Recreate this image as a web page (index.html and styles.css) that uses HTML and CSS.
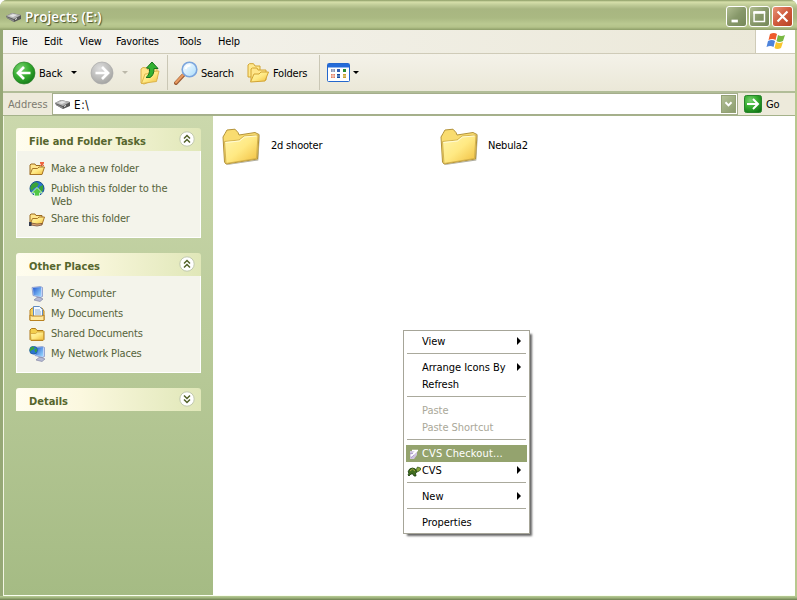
FILE: index.html
```
<!DOCTYPE html>
<html lang="en">
<head>
<meta charset="utf-8">
<title>Projects (E:)</title>
<link rel="stylesheet" href="styles.css">
</head>
<body>
<svg class="defs" aria-hidden="true">
  <defs>
    <linearGradient id="fold" x1="0" y1="0" x2="1" y2="1"><stop offset="0" stop-color="#fff5ac"/><stop offset=".5" stop-color="#ffe983"/><stop offset="1" stop-color="#f0bd3c"/></linearGradient>
    <radialGradient id="green" cx=".35" cy=".3" r=".8"><stop offset="0" stop-color="#79d170"/><stop offset=".5" stop-color="#36ad30"/><stop offset="1" stop-color="#117516"/></radialGradient>
    <radialGradient id="gray" cx=".4" cy=".3" r=".8"><stop offset="0" stop-color="#dedede"/><stop offset=".6" stop-color="#b9b9b7"/><stop offset="1" stop-color="#9c9c9a"/></radialGradient>
    <linearGradient id="blue" x1="0" y1="0" x2="1" y2="1"><stop offset="0" stop-color="#2458d0"/><stop offset="1" stop-color="#9bdcff"/></linearGradient>
    <linearGradient id="lens" x1="0" y1="0" x2="1" y2="1"><stop offset="0" stop-color="#fff"/><stop offset="1" stop-color="#a9dcfb"/></linearGradient>
    <symbol id="drive" viewBox="0 0 16 12"><path d="M0 5 6 2l9 2v4L8 11 1 7z" fill="#555"/><path d="M0 5 6 2l9 2-7 4z" fill="#b4b4b4"/><path d="M3 5l4-2 4 1-4 2z" fill="#e4e4e4"/><path d="M1 6l7 3v2L1 7z" fill="#888"/><path d="M9 8l2-1v1l-2 1z" fill="#eee"/></symbol>
    <symbol id="bigfolder" viewBox="0 0 38 38"><path d="M4 36.500 35.500 31.500 37.500 6l.3 2-1.500 24.500L5 37z" fill="#8c8975" opacity=".7"/><path d="M1 9 3 5.500 5 2l8-.8 3 3.300 1 2.500L33 4.500l4 2-1.500 24.500L4 36 2.500 34z" fill="#f9dc70" stroke="#b3933a"/><path d="M2.500 13.500 17 12l5-4 14-1-1.500 23.500L4 35.500z" fill="url(#fold)" stroke="#c9a745" stroke-width=".8"/><path d="M3.500 14.500 17.500 13l5-4 12-1" fill="none" stroke="#fffbd5"/></symbol>
    <symbol id="folder" viewBox="0 0 16 16"><path d="M1 13.500V4l1.500-1.500h4L8 4.500h6l1 1v8L14 14.500H2z" fill="#f3ce4e" stroke="#ae7918"/><path d="M1.500 7.500h5l2-1.500h6v7.500l-1 .5H2z" fill="url(#fold)" stroke="#ca9930" stroke-width=".7"/></symbol>
    <symbol id="openfolder" viewBox="0 0 16 16"><path d="M1 13.500V4l1-1h4l1 1.500h6V13z" fill="#ffe58b" stroke="#9b6a20"/><path d="M1 13.500 3.500 7.500h5L10 6h5.500L13 13.500z" fill="url(#fold)" stroke="#a87527"/></symbol>
    <symbol id="monitor" viewBox="0 0 16 16"><path d="M3 1.500 11.500.5l2 1v9l-2 1L4 9.500z" fill="#c0d2fa" stroke="#788bc0" stroke-width=".7"/><path d="M4 2 12 1v9.500L4.700 9z" fill="url(#blue)"/><path d="M8 11.500h3l3 1.500-3 2.500-6-1.500z" fill="#b5bad4" stroke="#777b9e" stroke-width=".6"/></symbol>
    <symbol id="globe" viewBox="0 0 16 16"><circle cx="8" cy="7.500" r="7" fill="#2a75d1" stroke="#174f8b"/><path d="M3 3l4-2 3 2-2 3-3 1-2 3-2-3zM10 6l4-2v5l-2 3-2-3z" fill="#39a339"/></symbol>
    <symbol id="chev" viewBox="0 0 16 16"><circle cx="8" cy="8" r="7.200" fill="#fff" stroke="#c1c9ae"/><path d="M5 7.500l3-3 3 3M5 11.500l3-3 3 3" fill="none" stroke="#526229" stroke-width="1.500"/></symbol>
  </defs>
</svg>
<div class="window">
  <header class="titlebar">
    <svg class="i-drive"><use href="#drive"/></svg><h1>Projects (E:)</h1>
    <div class="controls">
      <b class="ctl"><svg viewBox="0 0 21 21"><path d="M5 15.500h7" stroke="#fff" stroke-width="3"/></svg></b>
      <b class="ctl"><svg viewBox="0 0 21 21"><path d="M4.500 5.500v10.500h11.500V5.500" fill="none" stroke="#fff" stroke-width="1.600"/><path d="M3.700 6h13.100" stroke="#fff" stroke-width="3"/></svg></b>
      <b class="ctl close"><svg viewBox="0 0 21 21"><path d="M5 5l11 11M16 5l-11 11" stroke="#fff" stroke-width="2.400"/></svg></b>
    </div>
  </header>
  <div class="frame">
    <div class="menurow">
      <nav><span class="m1">File</span><span class="m2">Edit</span><span class="m3">View</span><span class="m4">Favorites</span><span class="m5">Tools</span><span class="m6">Help</span></nav>
      <div class="flag"><svg viewBox="0 0 20 18"><path d="M4 2q4-2 7 0L9.500 8q-3-2-7 0z" fill="#ee5b2b"/><path d="M12 3q3 2 7 0l-2 6q-4 2-6.500 0z" fill="#79b843"/><path d="M2 9q4-2 7 0l-1.500 6q-3-2-7 0z" fill="#4c83dc"/><path d="M10 10q3 2 7 0l-2 6q-4 2-6.500 0z" fill="#f8c52d"/></svg></div>
    </div>
    <div class="toolbar">
      <svg class="nav" viewBox="0 0 24 24"><circle cx="12" cy="12" r="11" fill="url(#green)" stroke="#2b8329" stroke-width=".7"/><path d="M18.500 12H6.500M12 6l-6 6 6 6" fill="none" stroke="#fff" stroke-width="2.700"/></svg>
      <span class="tb-back">Back</span><i class="drop"></i>
      <svg class="nav fwd" viewBox="0 0 24 24"><circle cx="12" cy="12" r="11" fill="url(#gray)" stroke="#aaa" stroke-width=".7"/><path d="M5.500 12h12M12 6l6 6-6 6" fill="none" stroke="#fff" stroke-width="2.700"/></svg>
      <i class="drop dim"></i>
      <svg class="up" viewBox="0 0 20 24"><path d="M1 22V8l2-1.500 4 .5 1 2 9-2v11L4 23z" fill="#ffe588" stroke="#d9b04a"/><path d="M1.500 22.500 5 13l5-.5 2-2 7-.5-2.500 10.500z" fill="url(#fold)" stroke="#d6aa3c" stroke-width=".8"/><path d="M6 16.500h4q4-2 4-9h4L12 1 6.500 7l3 .5q.5 6-3.500 9z" fill="#33b231" stroke="#187320"/></svg>
      <i class="vsep s1"></i>
      <svg class="search" viewBox="0 0 24 24"><path d="M2 22 9 14.500" stroke="#9b5c34" stroke-width="4" stroke-linecap="round"/><path d="M2 21.500 9 14" stroke="#e89a60" stroke-width="2.200" stroke-linecap="round"/><circle cx="15.500" cy="8.500" r="7.300" fill="url(#lens)" stroke="#7ba5dd" stroke-width="1.600"/><path d="M11.500 8q1-4 5-3.500" fill="none" stroke="#fff" stroke-width="2"/></svg>
      <span class="tb-search">Search</span>
      <svg class="folders" viewBox="0 0 22 20"><path d="M1 14V2l1.500-1.300h4L8 3h5v11z" fill="#ffe98f" stroke="#d2a433"/><path d="M4 18V6l1.500-1h4.500l1 2h8v10z" fill="#ffe68a" stroke="#d2a433"/><path d="M3.500 19 7 11h5l2-2h7.500l-3.500 9z" fill="url(#fold)" stroke="#d2a433"/></svg>
      <span class="tb-folders">Folders</span><i class="vsep s2"></i>
      <svg class="views" viewBox="0 0 23 19"><rect x=".5" y=".5" width="22" height="18" rx="1" fill="#fff" stroke="#2467cc"/><path d="M1 1h21v3.500H1z" fill="#246bd9"/><path d="M4 6h4v3H4z" fill="#8b98b8"/><path d="M10 6h3v3h-3z" fill="#345fb2"/><path d="M16 6h3v3h-3z" fill="#268b32"/><path d="M4 11h4v4H4z" fill="#e68264"/><path d="M10 11h3v4h-3z" fill="#164c9f"/><path d="M16 11h3v4h-3z" fill="#c8a32f"/><path d="M3 13h17M6 5v11" stroke="#fff" stroke-width=".6"/></svg>
      <i class="drop vdrop"></i>
    </div>
    <div class="address">
      <label>Address</label>
      <div class="field"><svg class="i-drive"><use href="#drive"/></svg><span class="path">E:\</span><b class="combo"><svg viewBox="0 0 15 17"><path d="M4 6.500l3.500 3.500L11 6.500" fill="none" stroke="#fff" stroke-width="2.200"/></svg></b></div>
      <svg class="go" viewBox="0 0 18 18"><rect x=".5" y=".5" width="17" height="17" rx="2" fill="url(#green)" stroke="#28842c"/><path d="M3 9h11M9 4l5 5-5 5" fill="none" stroke="#fff" stroke-width="2"/></svg><span class="golabel">Go</span>
    </div>
    <main>
      <aside>
        <section>
          <h2><span>File and Folder Tasks</span><svg><use href="#chev"/></svg></h2>
          <ul>
            <li><svg viewBox="0 0 16 16"><use href="#openfolder"/><path d="M11.500 2.500l1.500-1.500 1.500 1.500-1.500 2zM11 1l4 4M15 1l-4 4" fill="#f35b2c" stroke="#ee643f"/></svg><span>Make a new folder</span></li>
            <li class="two"><svg viewBox="0 0 16 16"><use href="#globe"/><path d="M2.500 12 8 6.500l5.500 5.500H10.500v3h-5v-3z" fill="#51c746" stroke="#e2ffe0" stroke-width=".8"/></svg><span>Publish this folder to the<br>Web</span></li>
            <li><svg viewBox="0 0 16 16"><use href="#openfolder"/><path d="M2 12l3 .5 3 .5 5-.5v1.500l-5 1L2 14z" fill="#e3ad79" stroke="#633b26" stroke-width=".7"/><path d="M0 11h2.500v4H0z" fill="#353c50"/></svg><span>Share this folder</span></li>
          </ul>
        </section>
        <section>
          <h2><span>Other Places</span><svg><use href="#chev"/></svg></h2>
          <ul>
            <li><svg><use href="#monitor"/></svg><span>My Computer</span></li>
            <li><svg viewBox="0 0 16 16"><path d="M1 14V4l2-2h10l2 3v9z" fill="#f5ce5c" stroke="#b88120"/><path d="M4.500.5h6l3 3v8h-9z" fill="#f5faff" stroke="#608bc1"/><path d="M6 4h5M6 6h6M6 8h6" stroke="#8caed9"/><path d="M1 9l2 1h10l2-1v5.500H1z" fill="#ffe9a0" stroke="#b88120"/></svg><span>My Documents</span></li>
            <li><svg><use href="#folder"/></svg><span>Shared Documents</span></li>
            <li><svg viewBox="0 0 16 16"><use href="#monitor" x="2" width="16" height="16"/><use href="#globe" width="9" height="9"/></svg><span>My Network Places</span></li>
          </ul>
        </section>
        <section>
          <h2><span>Details</span><svg class="flip"><use href="#chev"/></svg></h2>
        </section>
      </aside>
      <div class="files">
        <div class="file"><svg><use href="#bigfolder"/></svg><span>2d shooter</span></div>
        <div class="file"><svg><use href="#bigfolder"/></svg><span>Nebula2</span></div>
      </div>
    </main>
  </div>
</div>
<div class="ctx">
  <div class="it sub"><span>View</span></div><hr>
  <div class="it sub"><span>Arrange Icons By</span></div>
  <div class="it"><span>Refresh</span></div><hr>
  <div class="it off"><span>Paste</span></div>
  <div class="it off"><span>Paste Shortcut</span></div><hr>
  <div class="it sel"><svg viewBox="0 0 14 14"><path d="M3 4h7v4l-3 4H3z" fill="#cfc3df"/><path d="M4 9l6-5.500M5 3.500h6" fill="none" stroke="#fff" stroke-width="1.700"/><path d="M3 6.500h3M4 11l3-3" stroke="#b3a2d0"/></svg><span>CVS Checkout...</span></div>
  <div class="it sub"><svg viewBox="0 0 14 14"><path d="M1 8q1-4 4.500-4Q9 4 10 8l-1.500 1 .5 3H7l-1-2H4l-2 2-1-1 1-2z" fill="#426e20" stroke="#183b0a" stroke-width=".8"/><path d="M9 6l1.500-3 3 1v2l-3 2z" fill="#86a33b" stroke="#294d10" stroke-width=".7"/><path d="M3 7l2.500-2L8 7" fill="none" stroke="#a5a340"/></svg><span>CVS</span></div><hr>
  <div class="it sub"><span>New</span></div><hr>
  <div class="it"><span>Properties</span></div>
</div>
</body>
</html>
```
FILE: styles.css
```
* { box-sizing: border-box; }
body { margin: 0; width: 797px; height: 600px; overflow: hidden; background: #fff; color: #000; font: 11px/13px "DejaVu Sans Condensed", "DejaVu Sans", sans-serif; font-stretch: condensed; letter-spacing: -.2px; white-space: nowrap; }
svg { display: block; flex: none; }
.defs { position: absolute; width: 0; height: 0; }
.window { width: 797px; height: 600px; display: flex; flex-direction: column; border-radius: 7px 7px 0 0; overflow: hidden; background: linear-gradient(#a0b07c 595px, #b9cc97 596px, #9cb17a 598px, #6c7d50 600px); }
.titlebar { height: 30px; flex: none; display: flex; align-items: center; padding: 3px 4px 0 6px; background: linear-gradient(#8b9b64 0, #d6dfaa 2px, #c0cc98 5px, #a8b681 9px, #aab982 18px, #bac991 24px, #b4c38a 27px, #8d9d68 30px); }
.i-drive { width: 16px; height: 12px; }
h1 { margin: 1px 0 0 3px; font: 600 13.500px/18px "Open Sans", sans-serif; letter-spacing: .05px; color: #fff; text-shadow: 1px 1px 1px #46522c; }
.controls { margin-left: auto; display: flex; gap: 2px; }
.ctl { width: 21px; height: 21px; border: 1px solid #fff; border-radius: 3px; background: linear-gradient(135deg, #b0bd91, #87986a 50%, #76885a); }
.ctl svg { width: 19px; height: 19px; }
.close { background: linear-gradient(135deg, #e99478, #cf5a3c 50%, #b84424); }
.frame { flex: 1; min-height: 0; margin-bottom: 4px; display: flex; flex-direction: column; border: solid; border-width: 0 2px 0 3px; border-color: #9aae70 #b7c88f #829562 #96a876; background: #edeadb; }
.menurow { height: 24px; flex: none; display: flex; border-bottom: 1px solid #cfcbb8; background: linear-gradient(90deg, #f5f4ef, #ebe8d8); }
nav { flex: 1; display: flex; padding: 5px 0 0 9px; }
nav span { flex: none; }
.m1 { width: 32px; } .m2 { width: 35px; } .m3 { width: 37px; } .m4 { width: 62px; } .m5 { width: 40px; }
.flag { width: 40px; background: #fff; border-left: 1px solid #cfcbb8; padding: 2px 0 0 10px; }
.flag svg { width: 20px; height: 18px; }
.toolbar { height: 39px; flex: none; display: flex; align-items: center; padding-left: 9px; border-bottom: 2px solid #b1bd98; background: linear-gradient(#f4f2e9, #ebe8d8); }
.toolbar > span { padding-top: 1px; }
.nav { width: 24px; height: 24px; }
.tb-back { width: 27px; margin-left: 3px; }
.drop { border: solid transparent; border-width: 3px 3px 0; border-top-color: #000; margin-left: 5px; }
.fwd { margin-left: 13px; }
.dim { margin-left: 8px; border-top-color: #bbb8a9; }
.up { width: 20px; height: 24px; margin-left: 12px; }
.vsep { width: 1px; height: 35px; background: #cac7b5; }
.s1 { margin-left: 7px; }
.search { width: 24px; height: 24px; margin-left: 6px; }
.tb-search { margin-left: 3px; width: 34px; }
.folders { width: 22px; height: 20px; margin-left: 12px; }
.tb-folders { margin-left: 4px; width: 36px; }
.s2 { margin-left: 10px; }
.views { width: 23px; height: 19px; margin-left: 7px; }
.vdrop { margin-left: 3px; }
.address { height: 23px; flex: none; display: flex; align-items: center; padding-left: 5px; border-bottom: 1px solid #a5b28a; }
.address label { width: 44px; color: #7d7b70; letter-spacing: .05px; padding-top: 1px; }
.field { width: 686px; height: 22px; display: flex; align-items: center; gap: 3px; padding: 0 1px 0 2px; background: #fff; border: 1px solid #a5ae8c; }
.path { font-size: 11.500px; letter-spacing: .6px; padding-top: 2px; }
.combo { margin-left: auto; width: 15px; height: 18px; background: linear-gradient(135deg, #b4c198, #8b9c6d); border: 1px solid #93a174; }
.combo svg { width: 13px; height: 16px; }
.go { width: 18px; height: 18px; margin-left: 6px; }
.golabel { margin-left: 4px; padding-top: 1px; }
main { flex: 1; min-height: 0; display: flex; background: #fff; border-left: 1px solid #f3f6e4; border-bottom: 1px solid #fafff0; }
aside { width: 209px; flex: none; padding: 12px; display: flex; flex-direction: column; gap: 15px; background: linear-gradient(#cbd8ac, #a5bb84); color: #56633a; letter-spacing: -.17px; }
section { width: 185px; }
h2 { margin: 0; height: 23px; display: flex; justify-content: space-between; padding: 3px 6px 0 13px; border-radius: 3px 3px 0 0; background: linear-gradient(90deg, #fffdef, #fbf8df 35%, #e0e7b8); font-size: 11px; line-height: 21px; letter-spacing: 0; color: #56662d; }
h2 svg { width: 16px; height: 16px; }
.flip { transform: rotate(180deg); }
ul { list-style: none; margin: 0; padding: 10px 0 10px 13px; background: #f4f4eb; border: 1px solid #fff; border-top: 0; }
li { height: 20px; display: flex; gap: 6px; }
li span { padding-top: 1px; }
li svg { width: 16px; height: 16px; margin-left: -1px; }
li.two { height: 30px; }
section:first-child ul { height: 87px; }
section:nth-child(2) ul { height: 97px; }
.files { display: flex; padding: 12px 0 0 9px; align-items: flex-start; }
.file { width: 218px; display: flex; align-items: center; gap: 11px; }
.file svg { width: 38px; height: 38px; }
.file span { margin-top: -3px; }
.file + .file { gap: 10px; }
.ctx { position: absolute; left: 403px; top: 330px; width: 127px; height: 204px; padding: 2px; background: #fff; border: 1px solid #a6a598; box-shadow: 3px 3px 2px -1px #0009; letter-spacing: -.04px; }
.ctx hr { margin: 3px 1px 5px; border: 0; border-top: 1px solid #aaa99c; height: 1px; }
.it { height: 17px; display: flex; align-items: center; padding-left: 16px; }
.it svg { width: 14px; height: 14px; margin-left: -15px; margin-right: 1px; }
.sub::after { content: ""; margin: -2px 6px 0 auto; border: solid transparent; border-width: 4px 0 4px 4px; border-left-color: #000; }
.off { color: #aaa899; }
.sel { background: #94a36e; color: #fff; letter-spacing: .13px; }
```
